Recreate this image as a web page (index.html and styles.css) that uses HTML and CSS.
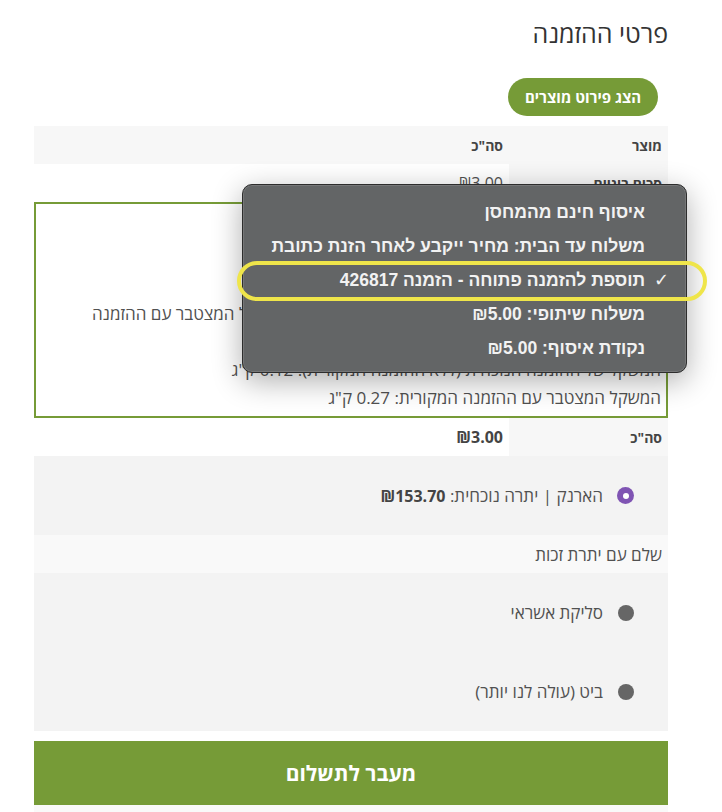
FILE: index.html
```html
<!DOCTYPE html>
<html lang="he" dir="rtl">
<head>
<meta charset="utf-8">
<title>פרטי ההזמנה</title>
<link rel="stylesheet" href="styles.css">
</head>
<body>
<div class="page">
  <h2 class="title">פרטי ההזמנה</h2>
  <div class="btn-row"><button class="pill">הצג פירוט מוצרים</button></div>

  <div class="table">
    <div class="row head"><div class="c1">מוצר</div><div class="c2">סה"כ</div></div>
    <div class="row sub"><div class="c1">סכום ביניים</div><div class="c2">₪3.00</div></div>
    <div class="ship">
      <div class="ln">משלוח</div>
      <div class="ln">בחרו את שיטת המשלוח</div>
      <div class="ln">תוספת להזמנה פתוחה</div>
      <div class="ln">ההזמנה תתווסף להזמנה הפתוחה ללא משלוח, בהתאם למשקל המצטבר עם ההזמנה</div>
      <div class="ln">הזמנה 426817</div>
      <div class="ln">המשקל של ההזמנה הנוכחית (ללא ההזמנה המקורית): 0.12 ק"ג</div>
      <div class="ln">המשקל המצטבר עם ההזמנה המקורית: 0.27 ק"ג</div>
    </div>
    <div class="row total"><div class="c1">סה"כ</div><div class="c2">₪3.00</div></div>
  </div>

  <div class="payment">
    <div class="wallet">
      <span class="radio"></span>
      <span>הארנק | יתרה נוכחית: <b>₪153.70</b></span>
    </div>
    <div class="credit-title">שלם עם יתרת זכות</div>
    <div class="methods">
      <div class="method"><span class="dot"></span><span>סליקת אשראי</span></div>
      <div class="method"><span class="dot"></span><span>ביט (עולה לנו יותר)</span></div>
    </div>
  </div>

  <button class="checkout">מעבר לתשלום</button>
  <div class="after"></div>

  <div class="menu">
    <div class="item">איסוף חינם מהמחסן</div>
    <div class="item">משלוח עד הבית: מחיר ייקבע לאחר הזנת כתובת</div>
    <div class="item selected"><span class="check">✓</span>תוספת להזמנה פתוחה - הזמנה 426817</div>
    <div class="item">משלוח שיתופי: ₪5.00</div>
    <div class="item">נקודת איסוף: ₪5.00</div>
  </div>
  <div class="highlight"></div>
</div>
</body>
</html>
```

FILE: styles.css
```css
* { box-sizing: border-box; }
html, body { margin: 0; padding: 0; background: #fff; }
body {
  direction: rtl;
  font-family: "Open Sans", "Liberation Sans", "DejaVu Sans", sans-serif;
  font-size: 17px;
  color: #515151;
}
.page {
  position: relative;
  width: 722px;
  height: 812px;
  overflow: hidden;
  padding: 0 54px 0 34px;
}
.title {
  margin: 18px 0 0;
  font-size: 25px;
  line-height: 30px;
  font-weight: 400;
  color: #333;
}
.btn-row {
  margin-top: 30px;
  display: flex;
  padding-right: 10px;
}
.pill {
  height: 38px;
  width: 150px;
  border: 0;
  border-radius: 19px;
  background: #769b37;
  color: #fff;
  font-family: inherit;
  font-size: 15px;
  font-weight: 700;
  padding: 0;
}
.table { margin-top: 10px; }
.row {
  display: grid;
  grid-template-columns: 159px 1fr;
  height: 38px;
}
.row > div {
  display: flex;
  align-items: center;
  padding-right: 6px;
}
.head { background: #f7f7f7; font-weight: 700; color: #444; font-size: 14px; }
.sub .c1, .total .c1 { background: #f7f7f7; font-weight: 700; color: #444; font-size: 14px; }
.sub .c2 { font-size: 16px; }
.total { height: 38px; }
.total .c2 { font-weight: 700; color: #444; font-size: 16px; }
.ship {
  height: 216px;
  border: 2px solid #769b37;
  padding: 12px 5px 0;
}
.ship .ln {
  height: 28px;
  line-height: 28px;
  white-space: nowrap;
}
.wallet {
  height: 79px;
  background: #f3f3f3;
  display: flex;
  align-items: center;
  gap: 14px;
  padding-right: 34px;
}
.wallet b { font-weight: 700; color: #444; font-size: 16px; }
.radio {
  width: 17px;
  height: 17px;
  border-radius: 50%;
  background: #7f54b3;
  display: flex;
  align-items: center;
  justify-content: center;
  flex: none;
}
.radio::after {
  content: "";
  width: 6px;
  height: 6px;
  border-radius: 50%;
  background: #fff;
}
.credit-title {
  height: 38px;
  background: #f9f9f9;
  display: flex;
  align-items: center;
  padding-right: 6px;
}
.methods { background: #f3f3f3; }
.method {
  height: 79px;
  display: flex;
  align-items: center;
  gap: 15px;
  padding-right: 34px;
}
.dot {
  width: 16px;
  height: 16px;
  border-radius: 50%;
  background: #666;
  flex: none;
}
.checkout {
  display: block;
  width: 100%;
  height: 64px;
  margin-top: 10px;
  border: 0;
  background: #769b37;
  color: #fff;
  font-family: inherit;
  font-size: 21px;
  font-weight: 700;
  padding: 0;
}
.after { height: 20px; background: #f9f9f9; }

.menu {
  position: absolute;
  left: 242px;
  top: 184px;
  width: 445px;
  height: 189px;
  background: #636566;
  border: 1px solid #2d2d2d;
  border-radius: 10px;
  box-shadow: inset 0 0 0 1px rgba(255,255,255,0.12), 0 8px 30px rgba(0,0,0,0.32);
  padding: 10px 41px 0 0;
  font-family: "Liberation Sans", "DejaVu Sans", sans-serif;
}
.item {
  position: relative;
  height: 34px;
  line-height: 34px;
  font-size: 17.5px;
  font-weight: 700;
  color: #f2f2f2;
  white-space: nowrap;
}
.check {
  position: absolute;
  right: -24px;
  top: 0;
  font-weight: 400;
  font-size: 18px;
}
.highlight {
  position: absolute;
  left: 237px;
  top: 261px;
  width: 470px;
  height: 40px;
  border: 4px solid #efe54a;
  border-radius: 21px;
}
```
